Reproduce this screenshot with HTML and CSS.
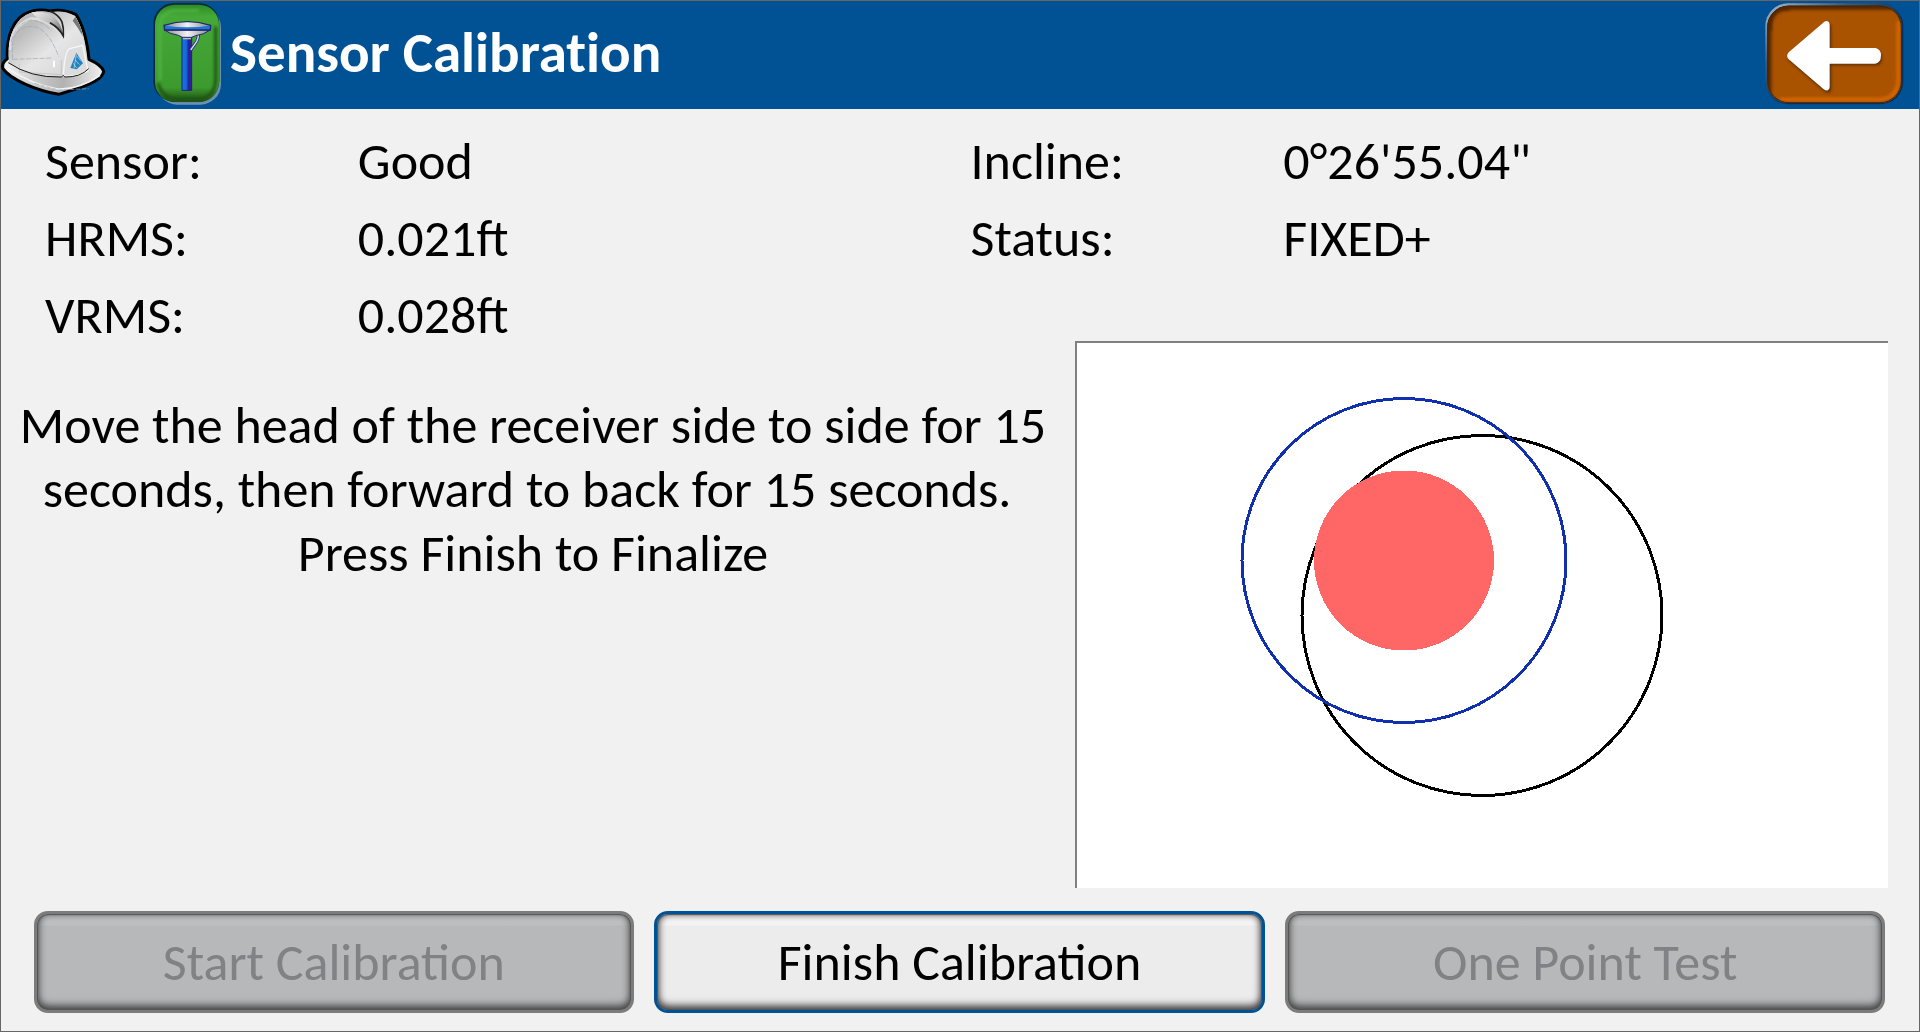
FILE: index.html
```html
<!DOCTYPE html>
<html lang="en">
<head>
<meta charset="utf-8">
<meta name="viewport" content="width=device-width, initial-scale=1">
<title>Sensor Calibration</title>
<link rel="stylesheet" href="styles.css">
</head>
<body>
<header class="bar">
  <button class="icon-button home" type="button" aria-label="Main menu">
    <svg class="helmet" viewBox="3 24 321 270" aria-hidden="true">
      <defs>
        <linearGradient id="shell" x1="0" y1="0" x2="1" y2="1">
          <stop offset="0" stop-color="#b8b8b8"/><stop offset=".25" stop-color="#bcbcbc"/>
          <stop offset=".55" stop-color="#e6e6e6"/><stop offset="1" stop-color="#cfcfcf"/>
        </linearGradient>
        <linearGradient id="brim" x1="0" y1="0" x2="1" y2="0">
          <stop offset="0" stop-color="#f4f4f4"/><stop offset=".35" stop-color="#c9c9c9"/>
          <stop offset=".6" stop-color="#b2b2b2"/><stop offset="1" stop-color="#f0f0f0"/>
        </linearGradient>
        <linearGradient id="ridge" x1="0" y1="0" x2="1" y2="1">
          <stop offset="0" stop-color="#ececec"/><stop offset=".5" stop-color="#bdbdbd"/><stop offset="1" stop-color="#5c5c5c"/>
        </linearGradient>
      </defs>
      <path d="M22 176C18 110 40 50 92 34Q122 26 150 33Q190 25 228 44C252 80 262 130 267 178Q306 196 311 214C308 242 250 262 176 283C110 272 30 238 9 206Q4 188 22 176Z" fill="url(#brim)" stroke="#000" stroke-width="9" stroke-linejoin="round"/>
      <path d="M27 180C22 110 44 56 94 38Q124 30 150 37Q190 29 225 48C247 82 258 130 264 212Q230 234 188 230Q90 232 27 188Z" fill="url(#shell)"/>
      <path d="M30 150Q30 80 92 56Q140 54 190 106" fill="none" stroke="#dedede" stroke-width="8"/>
      <path d="M96 37Q140 32 165 53Q186 76 189 104Q166 76 128 62Q102 50 96 37Z" fill="url(#ridge)"/>
      <path d="M150 34Q176 44 186 66Q192 84 190 108Q176 82 150 68" fill="none" stroke="#222" stroke-width="5"/>
      <path d="M226 50Q246 82 248 108Q234 82 218 62Z" fill="#777"/>
      <path d="M34 124Q48 70 92 60Q126 62 154 92M38 178L36 122Q54 80 94 79Q144 82 176 170M38 178L158 174" fill="none" stroke="#95a7ba" stroke-width="2" stroke-dasharray="16 4"/>
      <path d="M58 192V216L184 224V180" fill="none" stroke="#bbb" stroke-width="2"/>
      <path d="M162 182V202" stroke="#fff" stroke-width="6"/>
      <path d="M190 228C192 190 198 150 210 146L248 136L264 212Q236 232 190 228Z" fill="#dcdcdc" stroke="#f8f8f8" stroke-width="4"/>
      <path d="M25 188Q92 234 184 231L190 226L194 231Q242 232 266 206" fill="none" stroke="#161616" stroke-width="3"/>
      <path d="M24 206Q92 252 172 267Q236 270 300 226" fill="none" stroke="#f3f3f3" stroke-width="5"/>
      <path d="M104 250L176 270L266 266" fill="none" stroke="#9caec0" stroke-width="2" stroke-dasharray="14 4"/>
      <path d="M229 158L211 204L230 208L249 190Z" fill="#1b83c4"/>
      <path d="M230 168L242 182M226 180L238 194M220 190L230 204M229 162L222 205" stroke="#dcdcdc" stroke-width="2"/>
    </svg>
  </button>
  <svg class="receiver" viewBox="459 3 210 315" aria-hidden="true">
    <defs>
      <linearGradient id="green" x1="0" y1="0" x2="0" y2="1">
        <stop offset="0" stop-color="#2f8a24"/><stop offset=".12" stop-color="#45a938"/>
        <stop offset=".85" stop-color="#3d9a2e"/><stop offset="1" stop-color="#1d5012"/>
      </linearGradient>
      <linearGradient id="pole" x1="0" y1="0" x2="1" y2="0">
        <stop offset="0" stop-color="#0a7af0"/><stop offset=".45" stop-color="#1668d6"/><stop offset=".65" stop-color="#2a22a0"/><stop offset="1" stop-color="#2a2090"/>
      </linearGradient>
      <linearGradient id="dish" x1="0" y1="0" x2="1" y2="0">
        <stop offset="0" stop-color="#888"/><stop offset=".5" stop-color="#f2f2f2"/><stop offset="1" stop-color="#888"/>
      </linearGradient>
      <filter id="soft" x="-20%" y="-20%" width="140%" height="140%"><feGaussianBlur stdDeviation="4"/></filter>
    </defs>
    <rect x="473" y="20" width="193" height="294" rx="62" fill="#6f91b5"/>
    <rect x="463" y="9" width="198" height="296" rx="62" fill="#0b2a3c"/>
    <rect x="468" y="14" width="192" height="292" rx="60" fill="url(#green)"/>
    <path d="M650 80V240Q648 292 600 297H530Q490 294 477 250" fill="none" stroke="#1c5212" stroke-width="9" filter="url(#soft)"/>
    <path d="M483 240V80Q486 36 528 32H600" fill="none" stroke="#50b441" stroke-width="8" filter="url(#soft)"/>
    <path d="M549 112H578V271H549Z" fill="url(#pole)" stroke="#20207a" stroke-width="3"/>
    <path d="M552 104H576V118H552Z" fill="#bbb"/>
    <path d="M598 96Q600 118 588 132L575 150" fill="none" stroke="#232a80" stroke-width="9"/>
    <path d="M598 96Q600 118 588 132L575 150" fill="none" stroke="#d2dcf0" stroke-width="4"/>
    <path d="M496 90H634Q614 104 590 107L578 112H550L538 106Q512 102 496 90Z" fill="url(#dish)" stroke="#24246e" stroke-width="3"/>
    <path d="M495 76Q565 54 635 76L634 90H497Z" fill="#1978dc" stroke="#24246e" stroke-width="4"/>
    <path d="M499 77Q565 57 631 77Q565 86 499 77Z" fill="url(#dish)"/>
  </svg>
  <h1 class="title">Sensor Calibration</h1>
  <button class="icon-button back" type="button" aria-label="Back">
    <svg class="back-art" viewBox="73 3 423 309" aria-hidden="true">
      <defs>
        <filter id="glow" x="-20%" y="-20%" width="140%" height="140%"><feGaussianBlur stdDeviation="5"/></filter>
        <clipPath id="key"><rect x="83" y="14" width="403" height="292" rx="64"/></clipPath>
        <linearGradient id="rim" x1="0" y1="0" x2="1" y2="1">
          <stop offset="0" stop-color="#a8bccf"/><stop offset=".3" stop-color="#3a5a7c"/><stop offset=".6" stop-color="#04305c"/><stop offset="1" stop-color="#04305c"/>
        </linearGradient>
      </defs>
      <rect x="77" y="7" width="414" height="303" rx="68" fill="url(#rim)"/>
      <g clip-path="url(#key)">
        <rect x="83" y="14" width="403" height="292" fill="#a95200"/>
        <path d="M83 306V14H486" fill="none" stroke="#552800" stroke-width="24" filter="url(#glow)"/>
        <path d="M86 90Q86 18 150 18" fill="none" stroke="#552800" stroke-width="18" filter="url(#glow)"/>
        <path d="M120 295H420Q476 292 476 230V60" fill="none" stroke="#dc6800" stroke-width="10" filter="url(#glow)"/>
      </g>
      <rect x="84" y="15" width="401" height="290" rx="64" fill="none" stroke="#4a2502" stroke-width="3"/>
      <path d="M151 158L258 67Q264 64 264 72V150H406Q416 152 416 164Q416 180 406 180H264V258Q264 266 256 260L151 170Q146 164 151 158Z" transform="translate(4 6)" fill="#4e2b0a" stroke="#4e2b0a" stroke-width="12" stroke-linejoin="round" filter="url(#glow)"/>
      <path d="M151 158L258 67Q264 64 264 72V147H406Q418 150 418 163Q418 180 406 182H264V258Q264 266 256 260L151 170Q146 164 151 158Z" fill="#fff" stroke="#fff" stroke-width="12" stroke-linejoin="round"/>
    </svg>
  </button>
</header>
<main class="content">
  <dl class="readings">
    <dt>Sensor:</dt><dd>Good</dd><dt>Incline:</dt><dd>0°26'55.04"</dd>
    <dt>HRMS:</dt><dd>0.021ft</dd><dt>Status:</dt><dd>FIXED+</dd>
    <dt>VRMS:</dt><dd>0.028ft</dd>
  </dl>
  <div class="work">
    <p class="instructions">Move the head of the receiver side to side for 15<br>seconds, then forward to back for 15 seconds.&nbsp;<br>Press Finish to Finalize</p>
    <div class="plot">
      <svg class="bubble" viewBox="0 0 811 544" role="img" aria-label="Tilt bubble">
        <circle cx="405" cy="272" r="180" fill="none" stroke="#000" stroke-width="3"/>
        <circle cx="327" cy="217" r="162" fill="none" stroke="#1030b0" stroke-width="3"/>
        <circle cx="327" cy="217" r="90" fill="#ff6666"/>
      </svg>
    </div>
  </div>
  <div class="actions">
    <button class="action" type="button" disabled>Start Calibration</button>
    <button class="action" type="button">Finish Calibration</button>
    <button class="action" type="button" disabled>One Point Test</button>
  </div>
</main>
</body>
</html>
```
FILE: styles.css
```css
* { box-sizing: border-box; }

body {
  margin: 0;
  min-height: 100vh;
  display: flex;
  flex-direction: column;
  border: 1px solid #666;
  background: #f1f1f1;
  color: #000;
  font-family: Carlito, Lato, "Noto Sans", sans-serif;
  font-size: 52px;
  line-height: 64px;
}

.bar {
  display: flex;
  align-items: center;
  height: 108px;
  padding: 0 14px 4px 0;
  background: #005294;
  color: #fff;
}

.icon-button {
  display: block;
  padding: 0;
  border: 0;
  background: none;
}

.helmet { display: block; width: 107px; height: 90px; }
.home { margin-right: 44px; }
.receiver { width: 70px; height: 105px; }

.title {
  flex: 1;
  margin: 0 0 0 8px;
  font-size: 57px;
  font-weight: 700;
  line-height: 64px;
  font-variant-ligatures: none;
}

.back-art { display: block; width: 141px; height: 103px; }

.content {
  flex: 1;
  display: flex;
  flex-direction: column;
}

.readings {
  display: grid;
  grid-template-columns: 313fr 613fr 313fr 592fr;
  row-gap: 25px;
  margin: 0;
  padding: 26px 44px 0;
  line-height: 52px;
}
.readings dt, .readings dd { margin: 0; }

.work {
  flex: 1;
  display: grid;
  grid-template-columns: 1066fr 813fr;
  padding: 0 31px 0 8px;
}

.instructions {
  margin: 0;
  padding: 52px 18px 0 0;
  text-align: center;
  white-space: nowrap;
}

.plot {
  display: flex;
  background: #fff;
  border-top: 2px solid #808080;
  border-left: 2px solid #808080;
}
.bubble {
  display: block;
  flex: 1;
  min-width: 0;
  shape-rendering: crispEdges;
}

.actions {
  display: grid;
  grid-template-columns: 599fr 611fr 599fr;
  gap: 20px;
  padding: 23px 34px 18px 33px;
}

.action {
  height: 102px;
  padding: 0;
  border: 3px solid #005294;
  border-radius: 14px;
  background: linear-gradient(#fafafa, #f3f3f3 11px, #ececec 12px);
  box-shadow: inset 0 0 1px 1px #555, inset 0 -4px 8px 0 #444, inset 0 0 7px 1px #777;
  color: #000;
  font: inherit;
}
.action:disabled {
  border-color: #7c7c7c;
  background: linear-gradient(#c4c5c7, #bcbec0 11px, #b6b8ba 12px);
  color: #808285;
}
```
